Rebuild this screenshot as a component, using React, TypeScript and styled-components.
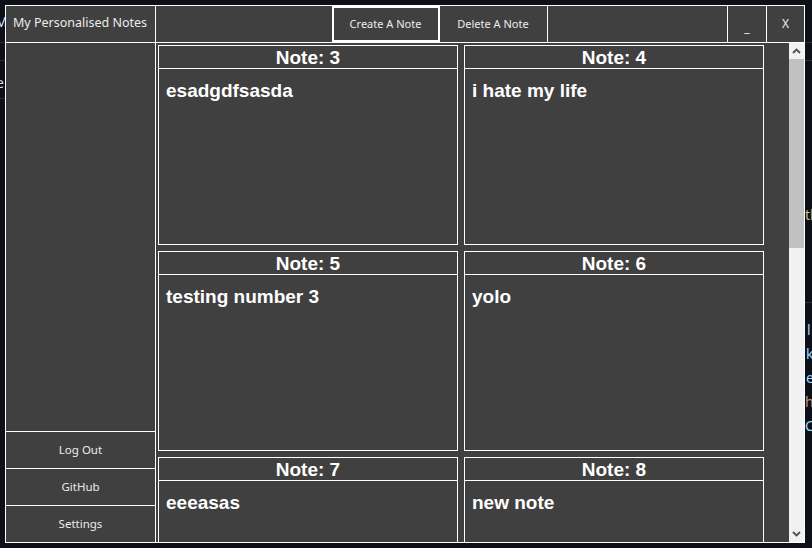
import React, { FC } from 'react';
import styled, { createGlobalStyle } from 'styled-components';

const GlobalStyle = createGlobalStyle`
  html, body {
    margin: 0;
    padding: 0;
    background: #0d1017;
  }
  * {
    box-sizing: border-box;
  }
`;

const Page = styled.div`
  position: relative;
  padding: 5px;
  width: 812px;
  height: 548px;
  overflow: hidden;
`;

// bits of the editor window that peek out behind the notes app
const Behind = styled.div`
  position: absolute;
  inset: 0;
  font-family: 'Noto Sans', sans-serif;
  font-size: 14px;
`;

const BehindLine = styled.div<{ $top: number; $left: number; $width: number }>`
  position: absolute;
  top: ${({ $top }) => `${$top}px`};
  left: ${({ $left }) => `${$left}px`};
  width: ${({ $width }) => `${$width}px`};
  height: 1px;
  background: #2a2f38;
`;

const BehindText = styled.span<{ $top: number; $left: number; $color: string }>`
  position: absolute;
  top: ${({ $top }) => `${$top}px`};
  left: ${({ $left }) => `${$left}px`};
  color: ${({ $color }) => $color};
  line-height: 16px;
`;

const Window = styled.div`
  position: relative;
  width: 800px;
  height: 538px;
  border: 1px solid #ffffff;
  background: #404040;
  display: flex;
  flex-direction: column;
  font-family: 'Noto Sans', 'Open Sans', sans-serif;
  color: #ececec;
`;

const TitleBar = styled.div`
  height: 37px;
  flex: 0 0 37px;
  display: flex;
  flex-direction: row;
  border-bottom: 1px solid #ffffff;
`;

const AppTitle = styled.div`
  width: 150px;
  border-right: 1px solid #ffffff;
  display: flex;
  align-items: center;
  padding: 0 0 3px 7px;
  font-size: 12.5px;
`;

const Spacer = styled.div<{ $grow: number; $divider?: boolean }>`
  flex: ${({ $grow }) => $grow} 1 0;
  border-right: ${({ $divider }) => ($divider ? '1px solid #ffffff' : 'none')};
`;

const BarButton = styled.div<{ $active?: boolean; $width: number }>`
  width: ${({ $width }) => `${$width}px`};
  display: flex;
  align-items: center;
  justify-content: center;
  padding-bottom: 2px;
  font-size: 11px;
  border: ${({ $active }) => ($active ? '2px solid #ffffff' : 'none')};
  border-right: ${({ $active }) => ($active ? '2px solid #ffffff' : '1px solid #ffffff')};
  cursor: pointer;
`;

const WindowControl = styled.div<{ $width: number; $last?: boolean; $low?: boolean }>`
  width: ${({ $width }) => `${$width}px`};
  display: flex;
  align-items: ${({ $low }) => ($low ? 'flex-end' : 'center')};
  padding-bottom: ${({ $low }) => ($low ? '6px' : '2px')};
  justify-content: center;
  font-size: 12px;
  border-right: ${({ $last }) => ($last ? 'none' : '1px solid #ffffff')};
`;

const Body = styled.div`
  flex: 1;
  display: flex;
  flex-direction: row;
  min-height: 0;
`;

const Sidebar = styled.div`
  width: 150px;
  flex: 0 0 150px;
  border-right: 1px solid #ffffff;
  display: flex;
  flex-direction: column;
  justify-content: flex-end;
`;

const SideButton = styled.div`
  height: 37px;
  border-top: 1px solid #ffffff;
  display: flex;
  align-items: center;
  justify-content: center;
  padding-bottom: 2px;
  font-size: 11.5px;
  cursor: pointer;
`;

const Content = styled.div`
  flex: 1;
  display: flex;
  flex-direction: row;
  min-width: 0;
`;

const NotesArea = styled.div`
  flex: 1;
  overflow: hidden;
  padding: 2px 0 4px 2px;
`;

const ScrollBar = styled.div`
  width: 15px;
  flex: 0 0 15px;
  background: #f1f1f1;
  display: flex;
  flex-direction: column;
`;

const ScrollButton = styled.div`
  height: 16px;
  flex: 0 0 16px;
  display: flex;
  align-items: center;
  justify-content: center;
`;

const ScrollTrack = styled.div`
  flex: 1;
`;

const ScrollThumb = styled.div`
  width: 100%;
  background: #c1c1c1;
`;

const NoteGrid = styled.div`
  display: grid;
  grid-template-columns: 300px 300px;
  grid-auto-rows: 200px;
  gap: 6px;
`;

const Card = styled.div`
  border: 1px solid #ffffff;
  display: flex;
  flex-direction: column;
  font-family: 'Liberation Sans', Arial, sans-serif;
  color: #ffffff;
`;

const CardHeader = styled.div`
  height: 23px;
  border-bottom: 1px solid #ffffff;
  display: flex;
  align-items: center;
  justify-content: center;
  padding-top: 1px;
  font-size: 19px;
  font-weight: 700;
`;

const CardText = styled.div`
  padding: 11px 7px;
  font-size: 19px;
  font-weight: 700;
`;

const notes = [
  { id: 3, text: 'esadgdfsasda' },
  { id: 4, text: 'i hate my life' },
  { id: 5, text: 'testing number 3' },
  { id: 6, text: 'yolo' },
  { id: 7, text: 'eeeasas' },
  { id: 8, text: 'new note' },
  { id: 9, text: 'shopping list' },
  { id: 10, text: 'meeting at 5' },
  { id: 11, text: 'call mum' },
  { id: 12, text: 'ideas' },
  { id: 13, text: 'todo' },
  { id: 14, text: 'another note' },
];

const behindLines = [
  { top: 42, left: 0, width: 5 },
  { top: 60, left: 0, width: 5 },
  { top: 98, left: 0, width: 5 },
  { top: 42, left: 805, width: 7 },
  { top: 60, left: 805, width: 7 },
  { top: 302, left: 805, width: 7 },
];

const behindText = [
  { top: 14, left: -5, color: '#cfe3ff', text: 'M' },
  { top: 75, left: -4, color: '#cfd8e3', text: 'e' },
  { top: 207, left: 805, color: '#d7ba7d', text: 'th' },
  { top: 322, left: 807, color: '#9cdcfe', text: 'l' },
  { top: 346, left: 806, color: '#9cdcfe', text: 'k' },
  { top: 370, left: 806, color: '#9cdcfe', text: 'e' },
  { top: 394, left: 805, color: '#ce9178', text: 'h' },
  { top: 418, left: 805, color: '#9cdcfe', text: 'C' },
];

const Chevron: FC<{ down?: boolean }> = ({ down }) => (
  <svg width="9" height="6" viewBox="0 0 9 6">
    <path
      d={down ? 'M1 1 L4.5 4.5 L8 1' : 'M1 5 L4.5 1.5 L8 5'}
      fill="none"
      stroke="#505050"
      strokeWidth="1.8"
    />
  </svg>
);

// thumb size follows the visible share of the notes list
const visibleShare = 0.405;

const App: FC = () => (
  <Page>
    <GlobalStyle />
    <Behind>
      {behindLines.map((l) => (
        <BehindLine key={`${l.top}-${l.left}`} $top={l.top} $left={l.left} $width={l.width} />
      ))}
      {behindText.map((t) => (
        <BehindText key={`${t.top}-${t.left}`} $top={t.top} $left={t.left} $color={t.color}>
          {t.text}
        </BehindText>
      ))}
    </Behind>
    <Window>
      <TitleBar>
        <AppTitle>My Personalised Notes</AppTitle>
        <Spacer $grow={176} />
        <BarButton $active $width={108}>Create A Note</BarButton>
        <BarButton $width={108}>Delete A Note</BarButton>
        <Spacer $grow={180} $divider />
        <WindowControl $width={39} $low>_</WindowControl>
        <WindowControl $width={37} $last>X</WindowControl>
      </TitleBar>
      <Body>
        <Sidebar>
          <SideButton>Log Out</SideButton>
          <SideButton>GitHub</SideButton>
          <SideButton>Settings</SideButton>
        </Sidebar>
        <Content>
          <NotesArea>
            <NoteGrid>
              {notes.map((note) => (
                <Card key={note.id}>
                  <CardHeader>{`Note: ${note.id}`}</CardHeader>
                  <CardText>{note.text}</CardText>
                </Card>
              ))}
            </NoteGrid>
          </NotesArea>
          <ScrollBar>
            <ScrollButton><Chevron /></ScrollButton>
            <ScrollTrack>
              <ScrollThumb style={{ height: `${visibleShare * 100}%` }} />
            </ScrollTrack>
            <ScrollButton><Chevron down /></ScrollButton>
          </ScrollBar>
        </Content>
      </Body>
    </Window>
  </Page>
);

export default App;
